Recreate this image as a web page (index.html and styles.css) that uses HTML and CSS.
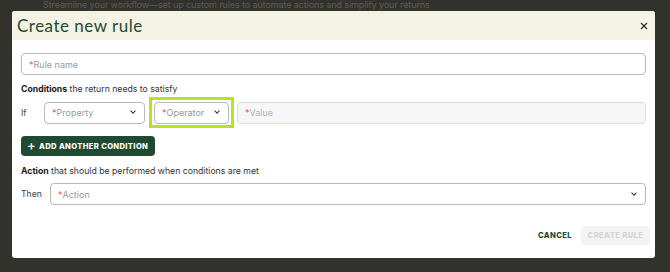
FILE: index.html
```html
<!DOCTYPE html>
<html lang="en">
<head>
  <meta charset="UTF-8" />
  <meta name="viewport" content="width=device-width, initial-scale=1.0" />
  <title>Create new rule</title>
  <link rel="stylesheet" href="styles.css">
</head>
<body>
  <p class="page-intro">Streamline your workflow—set up custom rules to automate actions and simplify your returns</p>

  <div class="modal">
    <header class="modal-head">
      <h1>Create new rule</h1>
      <button class="close" aria-label="Close">
        <svg width="8" height="8" viewBox="0 0 8 8"><path d="M1 1L7 7M7 1L1 7" stroke="#222" stroke-width="1.1" fill="none"/></svg>
      </button>
    </header>

    <div class="modal-body">
      <div class="field">
        <span class="req">*</span><span class="ph">Rule name</span>
      </div>

      <p class="label"><b>Conditions</b> the return needs to satisfy</p>

      <div class="row">
        <span class="row-lead">If</span>
        <div class="field select prop"><span class="req">*</span><span class="ph">Property</span><span class="caret"></span></div>
        <div class="focus-ring">
          <div class="field select op"><span class="req">*</span><span class="ph">Operator</span><span class="caret"></span></div>
        </div>
        <div class="field disabled grow"><span class="req">*</span><span class="ph">Value</span></div>
      </div>

      <button class="add-btn"><span class="plus">+</span> ADD ANOTHER CONDITION</button>

      <p class="label"><b>Action</b> that should be performed when conditions are met</p>

      <div class="row">
        <span class="row-lead">Then</span>
        <div class="field select grow"><span class="req">*</span><span class="ph">Action</span><span class="caret"></span></div>
      </div>
    </div>

    <footer class="modal-foot">
      <button class="cancel">CANCEL</button>
      <button class="create" disabled>CREATE RULE</button>
    </footer>
  </div>
</body>
</html>
```

FILE: styles.css
```css
:root {
  --bg: #32322c;
  --green: #1f4a31;
  --cream: #f5f2e6;
  --border: #b9b9b9;
  --muted: #9a9a9a;
  --red: #e0533f;
}

* {
  box-sizing: border-box;
}

body {
  margin: 0;
  height: 272px;
  overflow: hidden;
  background: var(--bg);
  font-family: Inter, 'Liberation Sans', sans-serif;
  color: #222;
}

.page-intro {
  margin: 0 0 0 43px;
  height: 11px;
  line-height: 10px;
  font-size: 9px;
  letter-spacing: -0.1px;
  color: #5e5e56;
  white-space: nowrap;
}

.modal {
  margin: 0 15px 0 12px;
  background: #fff;
  border-radius: 3px;
  overflow: hidden;
  height: 247px;
  display: flex;
  flex-direction: column;
}

.modal-head {
  background: var(--cream);
  height: 29px;
  display: flex;
  align-items: center;
  justify-content: space-between;
  padding: 0 6px 0 5px;
}

.modal-head h1 {
  margin: 0;
  font-family: Lato, sans-serif;
  font-weight: 400;
  font-size: 17px;
  letter-spacing: 0.5px;
  color: var(--green);
}

.close {
  border: none;
  background: none;
  padding: 0;
  width: 10px;
  height: 10px;
  display: flex;
  align-items: center;
  justify-content: center;
}

.modal-body {
  padding: 13px 9px 0 9px;
  flex: 1;
}

.field {
  height: 22px;
  border: 1px solid var(--border);
  border-radius: 4px;
  display: flex;
  align-items: center;
  padding: 0 7px;
  font-size: 9px;
  background: #fff;
}

.req {
  color: var(--red);
}

.ph {
  color: var(--muted);
  flex: 1;
}

.label {
  margin: 8px 0 2px;
  font-size: 8.7px;
  line-height: 12px;
  color: #333;
}

.label b {
  color: #1a1a1a;
}

.row {
  display: flex;
  align-items: center;
}

.row-lead {
  font-size: 8.7px;
  color: #444;
  width: 23px;
}

.row .row-lead + .field.grow {
  margin-left: 6px;
}

.select .caret {
  width: 4px;
  height: 4px;
  border-right: 1.4px solid #333;
  border-bottom: 1.4px solid #333;
  transform: rotate(45deg);
  margin: -3px 2px 0 0;
}

.prop {
  width: 101px;
}

.focus-ring {
  margin-left: 4px;
  border: 3px solid #b6e51f;
  padding: 0 2px;
  height: 31px;
  display: flex;
  align-items: center;
}

.op {
  width: 75px;
}

.grow {
  flex: 1;
}

.disabled {
  margin-left: 3px;
  background: #f5f6f8;
  border-color: #dcdcdc;
}

.disabled .ph {
  color: #b4b4b4;
}

.add-btn {
  margin-top: 8px;
  height: 20px;
  padding: 0 7px 0 6px;
  border: none;
  border-radius: 4px;
  background: var(--green);
  color: #fff;
  font-family: Inter, sans-serif;
  font-weight: 800;
  font-size: 7.6px;
  letter-spacing: 0.35px;
  display: flex;
  align-items: center;
  gap: 3px;
  white-space: nowrap;
}

.plus {
  font-size: 13px;
  font-weight: 500;
  line-height: 1;
  margin-top: -1px;
}

.add-btn + .label {
  margin: 9px 0 6px;
}

.modal-foot {
  display: flex;
  justify-content: flex-end;
  align-items: center;
  gap: 9px;
  padding: 0 5px 13px 0;
}

.modal-foot button {
  border: none;
  font-family: Inter, sans-serif;
  font-weight: 800;
  font-size: 7.6px;
  letter-spacing: 0.4px;
  border-radius: 4px;
  white-space: nowrap;
}

.cancel {
  background: none;
  color: var(--green);
  padding: 0;
}

.create {
  background: #f3f3f3;
  color: #d3d3d3;
  height: 19px;
  width: 69px;
  padding: 0;
}
```
